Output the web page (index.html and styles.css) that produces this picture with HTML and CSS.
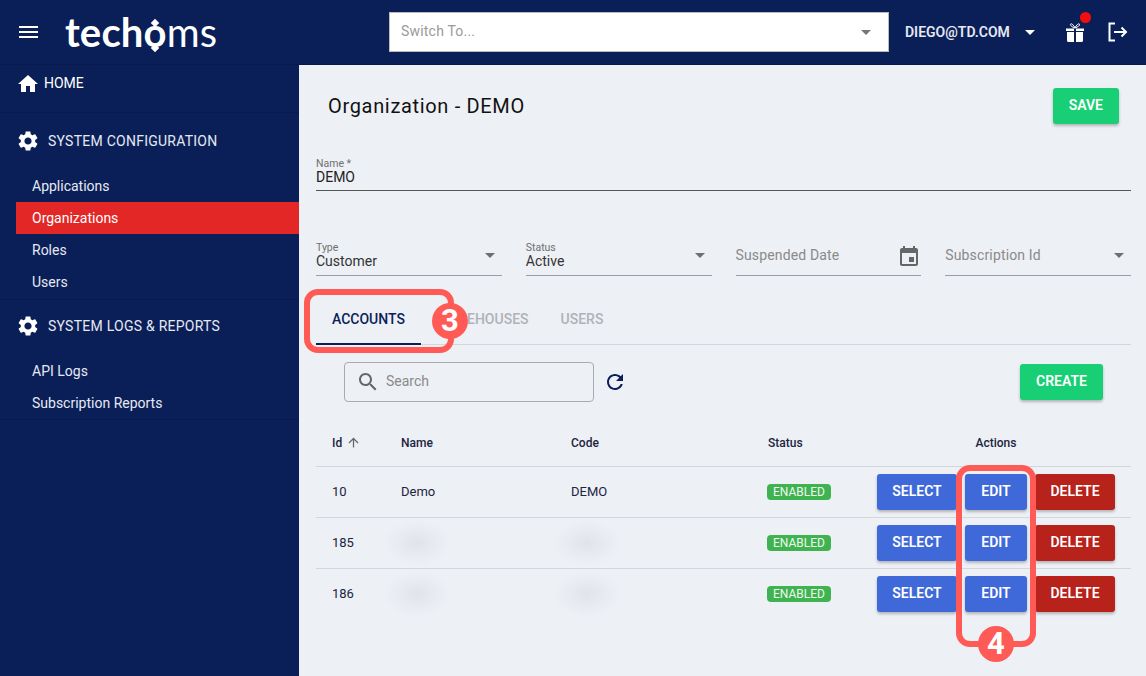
FILE: index.html
```html
<!DOCTYPE html>
<html lang="en">
<head>
    <meta charset="UTF-8">
    <meta name="viewport" content="width=device-width, initial-scale=1.0">
    <title>Organization - DEMO</title>
    <link rel="stylesheet" href="styles.css">
</head>
<body>
    <header class="topbar">
        <button class="menu-btn" aria-label="Menu"><span></span><span></span><span></span></button>
        <div class="logo">tech<span class="logo-o">o</span><span class="logo-thin">ms</span></div>
        <div class="switcher">
            <span>Switch To...</span>
            <i class="caret caret-grey"></i>
        </div>
        <div class="user">DIEGO@TD.COM</div>
        <i class="caret caret-white"></i>
        <div class="gift">
            <svg width="24" height="24" viewBox="0 0 24 24">
                <path d="M4 12h7v10H5.500a1.500 1.500 0 0 1-1.500-1.500zM13 12h7v8.500a1.500 1.500 0 0 1-1.500 1.500H13zM3 8.500h8V11H3zM13 8.500h8V11h-8z" fill="#fff"/>
                <path d="M12 8C9 7 7 5.500 7.500 4.200 8.200 3 10.500 4.500 12 8c1.500-3.500 3.800-5 4.500-3.800C17 5.500 15 7 12 8z" fill="none" stroke="#fff" stroke-width="1"/>
            </svg>
            <span class="gift-dot"></span>
        </div>
        <svg class="logout" width="24" height="24" viewBox="0 0 24 24" fill="none" stroke="#fff" stroke-width="2">
            <path d="M10 3.500H4.500v17H10"/>
            <path d="M9 12h12M16.500 7.500 21 12l-4.500 4.500"/>
        </svg>
    </header>

    <div class="layout">
        <nav class="sidebar">
            <section class="nav-home">
                <svg class="nav-icon" viewBox="0 0 24 24"><path d="M10 20v-6h4v6h5v-8h3L12 3 2 12h3v8z"/></svg>
                <span>HOME</span>
            </section>
            <section class="nav-section">
                <div class="nav-title">
                    <svg class="nav-icon" viewBox="0 0 24 24"><path d="M19.140 12.940c.04-.3.06-.61.06-.94 0-.32-.02-.64-.07-.94l2.030-1.580c.18-.14.23-.41.12-.61l-1.920-3.320c-.12-.22-.37-.29-.59-.22l-2.390.96c-.5-.38-1.030-.7-1.620-.94l-.36-2.540c-.04-.24-.24-.41-.48-.41h-3.840c-.24 0-.43.17-.47.41l-.36 2.540c-.59.24-1.130.57-1.620.94l-2.390-.96c-.22-.08-.47 0-.59.22L2.740 8.870c-.12.21-.08.47.12.61l2.030 1.580c-.05.3-.09.63-.09.94s.02.64.07.94l-2.030 1.580c-.18.14-.23.41-.12.61l1.920 3.320c.12.22.37.29.59.22l2.390-.96c.5.38 1.030.7 1.620.94l.36 2.540c.05.24.24.41.48.41h3.840c.24 0 .44-.17.47-.41l.36-2.540c.59-.24 1.130-.56 1.620-.94l2.390.96c.22.08.47 0 .59-.22l1.920-3.320c.12-.22.07-.47-.12-.61l-2.010-1.580zM12 15.600c-1.980 0-3.600-1.620-3.600-3.600s1.620-3.600 3.600-3.600 3.600 1.620 3.600 3.600-1.620 3.600-3.600 3.600z"/></svg>
                    <span>SYSTEM CONFIGURATION</span>
                </div>
                <a class="nav-link">Applications</a>
                <a class="nav-link active">Organizations</a>
                <a class="nav-link">Roles</a>
                <a class="nav-link">Users</a>
            </section>
            <section class="nav-section">
                <div class="nav-title">
                    <svg class="nav-icon" viewBox="0 0 24 24"><path d="M19.140 12.940c.04-.3.06-.61.06-.94 0-.32-.02-.64-.07-.94l2.030-1.580c.18-.14.23-.41.12-.61l-1.920-3.320c-.12-.22-.37-.29-.59-.22l-2.390.96c-.5-.38-1.030-.7-1.620-.94l-.36-2.540c-.04-.24-.24-.41-.48-.41h-3.840c-.24 0-.43.17-.47.41l-.36 2.540c-.59.24-1.130.57-1.620.94l-2.390-.96c-.22-.08-.47 0-.59.22L2.740 8.870c-.12.21-.08.47.12.61l2.030 1.580c-.05.3-.09.63-.09.94s.02.64.07.94l-2.030 1.580c-.18.14-.23.41-.12.61l1.920 3.320c.12.22.37.29.59.22l2.390-.96c.5.38 1.030.7 1.620.94l.36 2.540c.05.24.24.41.48.41h3.840c.24 0 .44-.17.47-.41l.36-2.540c.59-.24 1.130-.56 1.620-.94l2.390.96c.22.08.47 0 .59-.22l1.920-3.320c.12-.22.07-.47-.12-.61l-2.010-1.580zM12 15.600c-1.980 0-3.600-1.620-3.600-3.600s1.620-3.600 3.600-3.600 3.600 1.620 3.600 3.600-1.620 3.600-3.600 3.600z"/></svg>
                    <span>SYSTEM LOGS &amp; REPORTS</span>
                </div>
                <a class="nav-link">API Logs</a>
                <a class="nav-link">Subscription Reports</a>
            </section>
        </nav>

        <main class="content">
            <div class="title-row">
                <h1>Organization - DEMO</h1>
                <button class="btn btn-green">SAVE</button>
            </div>

            <div class="field field-name">
                <label>Name *</label>
                <div class="value">DEMO</div>
            </div>

            <div class="field-row">
                <div class="field">
                    <label>Type</label>
                    <div class="value">Customer</div>
                    <i class="caret caret-dark"></i>
                </div>
                <div class="field">
                    <label>Status</label>
                    <div class="value">Active</div>
                    <i class="caret caret-dark"></i>
                </div>
                <div class="field field-empty">
                    <div class="placeholder">Suspended Date</div>
                    <svg class="date-icon" viewBox="0 0 24 24"><path d="M17 12h-5v5h5v-5zM16 1v2H8V1H6v2H5c-1.110 0-1.990.9-1.990 2L3 19c0 1.100.89 2 2 2h14c1.100 0 2-.9 2-2V5c0-1.100-.9-2-2-2h-1V1h-2zm3 18H5V8h14v11z"/></svg>
                </div>
                <div class="field field-empty">
                    <div class="placeholder">Subscription Id</div>
                    <i class="caret caret-dark"></i>
                </div>
            </div>

            <div class="tabs">
                <div class="tab active">ACCOUNTS</div>
                <div class="tab">WAREHOUSES</div>
                <div class="tab">USERS</div>
            </div>

            <div class="toolbar">
                <div class="search">
                    <svg viewBox="0 0 24 24"><path d="M15.500 14h-.79l-.28-.27C15.410 12.590 16 11.110 16 9.500 16 5.910 13.090 3 9.500 3S3 5.910 3 9.500 5.910 16 9.500 16c1.610 0 3.090-.59 4.230-1.570l.27.28v.79l5 4.990L20.490 19l-4.990-5zm-6 0C7.010 14 5 11.990 5 9.500S7.010 5 9.500 5 14 7.010 14 9.500 11.990 14 9.500 14z"/></svg>
                    <span>Search</span>
                </div>
                <svg class="refresh" viewBox="0 0 24 24"><path d="M17.650 6.350C16.200 4.900 14.210 4 12 4c-4.420 0-7.990 3.580-7.990 8s3.570 8 7.990 8c3.730 0 6.840-2.550 7.730-6h-2.080c-.82 2.330-3.040 4-5.650 4-3.310 0-6-2.690-6-6s2.690-6 6-6c1.660 0 3.140.69 4.220 1.780L13 11h7V4l-2.350 2.350z"/></svg>
                <button class="btn btn-green btn-create">CREATE</button>
            </div>

            <table class="grid">
                <colgroup>
                    <col class="col-id"><col class="col-name"><col class="col-code"><col class="col-status"><col class="col-actions">
                </colgroup>
                <thead>
                    <tr>
                        <th>Id <svg class="sort" viewBox="0 0 24 24"><path d="M4 12l1.410 1.410L11 7.830V20h2V7.830l5.580 5.590L20 12l-8-8-8 8z"/></svg></th>
                        <th>Name</th>
                        <th>Code</th>
                        <th>Status</th>
                        <th class="th-actions">Actions</th>
                    </tr>
                </thead>
                <tbody>
                    <tr>
                        <td>10</td>
                        <td>Demo</td>
                        <td>DEMO</td>
                        <td><span class="badge">ENABLED</span></td>
                        <td class="actions"><button class="btn btn-blue">SELECT</button><button class="btn btn-blue btn-edit">EDIT</button><button class="btn btn-red">DELETE</button></td>
                    </tr>
                    <tr>
                        <td>185</td>
                        <td><span class="smudge"></span></td>
                        <td><span class="smudge"></span></td>
                        <td><span class="badge">ENABLED</span></td>
                        <td class="actions"><button class="btn btn-blue">SELECT</button><button class="btn btn-blue btn-edit">EDIT</button><button class="btn btn-red">DELETE</button></td>
                    </tr>
                    <tr>
                        <td>186</td>
                        <td><span class="smudge"></span></td>
                        <td><span class="smudge"></span></td>
                        <td><span class="badge">ENABLED</span></td>
                        <td class="actions"><button class="btn btn-blue">SELECT</button><button class="btn btn-blue btn-edit">EDIT</button><button class="btn btn-red">DELETE</button></td>
                    </tr>
                </tbody>
            </table>
        </main>
    </div>

    <!-- callouts drawn on top of the screenshot -->
    <div class="callout callout-tabs"></div>
    <div class="callout-num num-3">3</div>
    <div class="callout callout-edit"></div>
    <div class="callout-num num-4">4</div>
</body>
</html>
```

FILE: styles.css
```css
* {
    box-sizing: border-box;
}

html,
body {
    margin: 0;
    height: 100%;
    overflow: hidden;
}

body {
    font-family: Roboto, "Liberation Sans", sans-serif;
    font-size: 14px;
    color: #1c2440;
    background-color: #edf0f5;
}

button {
    font-family: inherit;
}

/* top bar */
.topbar {
    height: 65px;
    display: flex;
    align-items: center;
    background-color: #0a1f58;
    border-bottom: 1px solid #081a4c;
    color: #fff;
}

.menu-btn {
    width: 19px;
    height: 12px;
    margin-left: 19px;
    padding: 0;
    border: none;
    background: none;
    display: flex;
    flex-direction: column;
    justify-content: space-between;
}

.menu-btn span {
    display: block;
    width: 19px;
    height: 2px;
    background-color: #fff;
}

.logo {
    margin-left: 27px;
    width: 151px;
    font-family: Lato, sans-serif;
    font-size: 40px;
    font-weight: 700;
    line-height: 1;
    letter-spacing: 0.15px;
    white-space: nowrap;
}

.logo-o {
    position: relative;
    font-weight: 700;
}

.logo-o::before,
.logo-o::after {
    content: "";
    position: absolute;
    left: 50%;
    width: 6px;
    height: 6px;
    margin-left: -3px;
    background-color: #fff;
    transform: rotate(45deg);
}

.logo-o::before {
    top: 12px;
}

.logo-o::after {
    bottom: 5px;
}

.logo-thin {
    font-weight: 400;
}

.switcher {
    width: 500px;
    height: 40px;
    margin-left: 173px;
    padding: 0 17px 2px 11px;
    display: flex;
    align-items: center;
    justify-content: space-between;
    background-color: #fff;
    border: 1px solid #bbb;
    color: #9a9a9a;
    letter-spacing: 0.2px;
}

.user {
    margin-left: 16px;
    font-size: 14px;
    font-weight: 600;
    color: #e6e9f2;
}

.caret {
    display: block;
    width: 0;
    height: 0;
    border-left: 5px solid transparent;
    border-right: 5px solid transparent;
    border-top: 5px solid #fff;
}

.caret-white {
    margin-left: 15px;
}

.caret-grey {
    margin-top: 2px;
    border-top-color: #777;
}

.caret-dark {
    position: absolute;
    right: 7px;
    bottom: 17px;
    border-top-color: #6f6f6f;
}

.gift {
    position: relative;
    width: 24px;
    height: 24px;
    margin-left: 28px;
}

.gift-dot {
    position: absolute;
    top: -8px;
    left: 17px;
    width: 11px;
    height: 11px;
    border-radius: 50%;
    background-color: #f40d0d;
}

.logout {
    margin-left: 18px;
}

/* sidebar */
.layout {
    height: 611px;
    display: flex;
}

.sidebar {
    width: 299px;
    flex-shrink: 0;
    background-color: #0a1f58;
    color: #fff;
}

.nav-icon {
    width: 24px;
    height: 24px;
    fill: #fff;
    flex-shrink: 0;
}

.nav-home {
    height: 48px;
    padding: 7px 0 0 16px;
    display: flex;
    align-items: flex-start;
    gap: 4px;
    border-bottom: 1px solid #081a4c;
}

.nav-home span {
    line-height: 22px;
}

.nav-section {
    border-bottom: 1px solid #081a4c;
    padding-bottom: 1px;
}

.nav-section + .nav-section {
    padding-bottom: 0;
    height: 120px;
}

.nav-title {
    height: 57px;
    padding: 0 0 1px 16px;
    display: flex;
    align-items: center;
    gap: 8px;
    color: #e6e9f2;
    letter-spacing: 0.25px;
}

.nav-section + .nav-section .nav-title {
    height: 55px;
    padding-bottom: 4px;
}

.nav-link {
    display: block;
    height: 32px;
    margin-left: 16px;
    padding-left: 16px;
    line-height: 32px;
    color: #e6e9f2;
}

.nav-link.active {
    background-color: #e32727;
    color: #fff;
}

/* content */
.content {
    flex: 1;
    padding: 23px 15px 0 17px;
}

.title-row {
    height: 36px;
    padding: 0 12px;
    display: flex;
    align-items: center;
    justify-content: space-between;
}

h1 {
    margin: 0;
    font-size: 20px;
    font-weight: 400;
    letter-spacing: 0.67px;
    color: #111;
}

.btn {
    height: 36px;
    min-width: 62px;
    padding: 0 16px 2px;
    border: none;
    border-radius: 3px;
    font-size: 14px;
    font-weight: 600;
    color: #fff;
    box-shadow: 0 2px 3px rgba(0, 0, 0, 0.25);
}

.btn-green {
    background-color: #19cf75;
}

.btn-blue {
    min-width: 80px;
    background-color: #3f69d9;
}

.btn-edit {
    min-width: 62px;
}

.btn-red {
    min-width: 80px;
    background-color: #b7221b;
}

.field {
    position: relative;
    height: 34px;
    border-bottom: 1px solid #9a9ea6;
}

.field label {
    display: block;
    font-size: 10.500px;
    line-height: 12px;
    color: #6f6f6f;
}

.value {
    line-height: 15px;
    color: #333;
}

.field-name {
    margin-top: 33px;
    padding-top: 1px;
    border-bottom-color: #555;
}

.field-name .value {
    line-height: 15px;
    color: #222;
}

.field-row {
    margin-top: 50px;
    display: grid;
    grid-template-columns: repeat(4, 1fr);
    column-gap: 24px;
}

.field-row .field {
    height: 35px;
    padding-top: 1px;
}

.field-empty {
    color: #8a8a8a;
}

.placeholder {
    line-height: 16px;
    margin-top: 5px;
    letter-spacing: 0.15px;
}

.date-icon {
    position: absolute;
    right: 0;
    bottom: 6px;
    width: 24px;
    height: 24px;
    fill: #666;
}

/* tabs */
.tabs {
    margin-top: 20px;
    height: 49px;
    display: flex;
    border-bottom: 1px solid #d3d6dc;
}

.tab {
    height: 49px;
    padding: 0 16px;
    line-height: 46px;
    font-weight: 500;
    color: #b0b2b8;
}

.tab.active {
    color: #0a1f58;
    border-bottom: 2px solid #0a1f58;
}

/* search row */
.toolbar {
    margin-top: 17px;
    padding: 0 28px;
    display: flex;
    align-items: center;
}

.search {
    width: 250px;
    height: 40px;
    padding: 0 0 0 11px;
    display: flex;
    align-items: center;
    gap: 6px;
    border: 1px solid #a9abb0;
    border-radius: 4px;
    color: #8a8a8a;
}

.search span {
    margin-top: -2px;
}

.search svg {
    width: 24px;
    height: 24px;
    fill: #666;
}

.refresh {
    width: 24px;
    height: 24px;
    margin-left: 9px;
    fill: #0a1f58;
}

.btn-create {
    margin-left: auto;
}

/* table */
.grid {
    width: 815px;
    margin-top: 20px;
    border-collapse: collapse;
    table-layout: fixed;
}

.col-id {
    width: 69px;
}

.col-name {
    width: 170px;
}

.col-code {
    width: 197px;
}

.col-status {
    width: 109px;
}

.col-actions {
    width: 270px;
}

.grid th {
    height: 44px;
    padding: 0 16px 2px;
    text-align: left;
    font-size: 12px;
    font-weight: 500;
    color: #1c2440;
    border-bottom: 1px solid #d3d6dc;
}

.grid .th-actions {
    text-align: center;
}

.sort {
    width: 15px;
    height: 15px;
    margin-left: 1px;
    vertical-align: -3px;
    fill: #666;
}

.grid td {
    height: 51px;
    padding: 0 16px;
    font-size: 13px;
    color: #1c2440;
    border-bottom: 1px solid #d3d6dc;
}

.grid tr:last-child td {
    border-bottom: none;
}

.actions {
    white-space: nowrap;
}

.actions .btn {
    padding: 0 0 1px;
    margin-right: 8px;
    vertical-align: middle;
}

.badge {
    display: block;
    width: 64px;
    height: 16px;
    margin-left: -1px;
    border-radius: 4px;
    background-color: #3fb350;
    color: #eef8ef;
    font-size: 12px;
    line-height: 16px;
    text-align: center;
}

.smudge {
    display: block;
    width: 68px;
    height: 46px;
    margin-left: -18px;
    background: radial-gradient(ellipse closest-side, #e0e3ea, #e7eaf0 50%, #edf0f5);
}

/* callouts */
.callout {
    position: absolute;
    border: 6px solid #ff5a55;
    border-radius: 14px;
}

.callout-tabs {
    left: 304px;
    top: 289px;
    width: 150px;
    height: 64px;
}

.callout-edit {
    left: 956px;
    top: 465px;
    width: 80px;
    height: 182px;
}

.callout-num {
    position: absolute;
    width: 36px;
    height: 36px;
    border-radius: 50%;
    background-color: #ff5a55;
    color: #fff;
    font-size: 31px;
    font-weight: 700;
    line-height: 36px;
    text-align: center;
}

.num-3 {
    left: 432px;
    top: 303px;
}

.num-4 {
    left: 978px;
    top: 626px;
}
```
